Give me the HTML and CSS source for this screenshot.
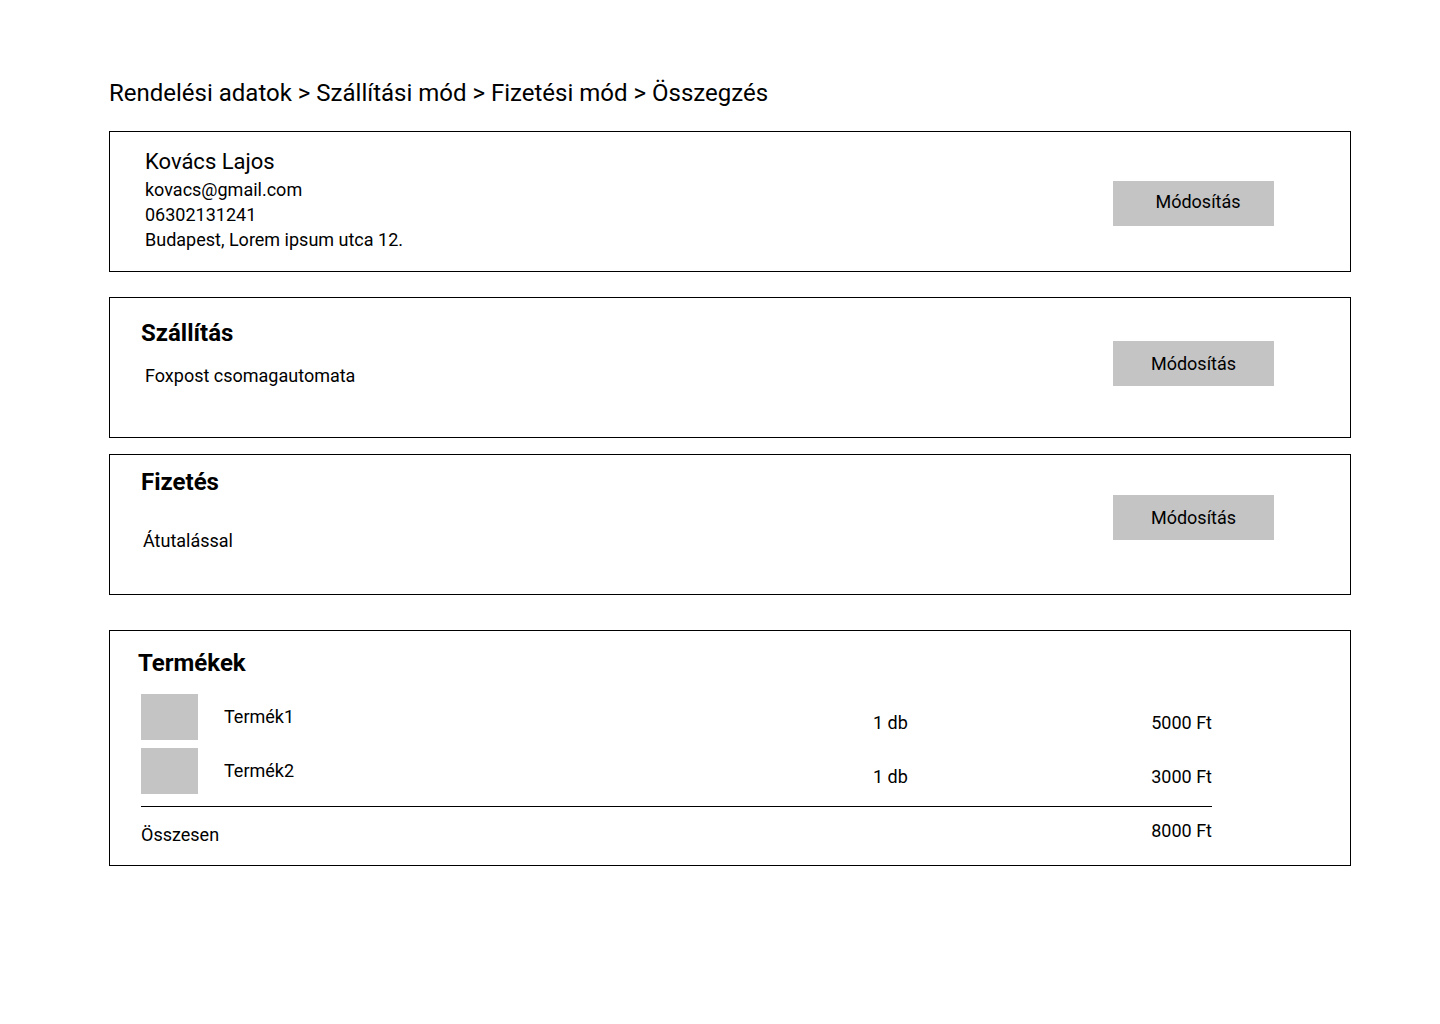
FILE: index.html
```html
<!DOCTYPE html>
<html lang="hu">
<head>
<meta charset="utf-8">
<title>Összegzés</title>
<link rel="stylesheet" href="styles.css">
</head>
<body>
<main class="page">
  <nav class="crumbs">Rendelési adatok &gt; Szállítási mód &gt; Fizetési mód &gt; Összegzés</nav>

  <section class="card card--customer">
    <div class="card-body">
      <div class="customer-name">Kovács Lajos</div>
      <div class="line">kovacs@gmail.com</div>
      <div class="line">06302131241</div>
      <div class="line">Budapest, Lorem ipsum utca 12.</div>
    </div>
    <button class="btn btn--customer">Módosítás</button>
  </section>

  <section class="card card--shipping">
    <div class="card-body">
      <h2 class="card-title">Szállítás</h2>
      <div class="value value--shipping">Foxpost csomagautomata</div>
    </div>
    <button class="btn btn--shipping">Módosítás</button>
  </section>

  <section class="card card--payment">
    <div class="card-body">
      <h2 class="card-title">Fizetés</h2>
      <div class="value value--payment">Átutalással</div>
    </div>
    <button class="btn btn--payment">Módosítás</button>
  </section>

  <section class="card card--products">
    <h2 class="card-title card-title--products">Termékek</h2>
    <div class="products">
      <div class="product">
        <div class="thumb"></div>
        <div class="p-name">Termék1</div>
        <div class="p-qty">1 db</div>
        <div class="p-price">5000 Ft</div>
      </div>
      <div class="product">
        <div class="thumb"></div>
        <div class="p-name">Termék2</div>
        <div class="p-qty">1 db</div>
        <div class="p-price">3000 Ft</div>
      </div>
    </div>
    <div class="total">
      <div class="total-label">Összesen</div>
      <div class="total-price">8000 Ft</div>
    </div>
  </section>
</main>
</body>
</html>
```

FILE: styles.css
```css
* { box-sizing: border-box; }

html, body {
  margin: 0;
  padding: 0;
  background: #ffffff;
}

body {
  font-family: Roboto, "Liberation Sans", Arial, sans-serif;
  color: #000;
}

.page {
  width: 1242px;
  margin-left: 109px;
  padding-top: 78px;
}

.crumbs {
  font-size: 24px;
  line-height: 30px;
  margin-bottom: 23px;
}

.card {
  border: 1px solid #000;
  display: flex;
  align-items: flex-start;
}

.card--customer,
.card--shipping,
.card--payment {
  height: 141px;
}

.card--customer { margin-bottom: 25px; padding: 14px 76px 0 35px; }
.card--shipping { margin-bottom: 16px; padding: 20px 76px 0 31px; }
.card--payment { margin-bottom: 35px; padding: 12px 76px 0 31px; }

.card-body { flex: 1; }

.customer-name {
  font-size: 22px;
  line-height: 31px;
}

.line {
  font-size: 18px;
  line-height: 25px;
}

.card-title {
  margin: 0;
  font-size: 24px;
  line-height: 30px;
  font-weight: 700;
}

.value {
  font-size: 18px;
  line-height: 24px;
}

.value--shipping { margin-top: 16px; padding-left: 4px; }
.value--payment { margin-top: 32px; padding-left: 2px; }

.btn {
  width: 161px;
  height: 45px;
  border: none;
  background: #c4c4c4;
  font-family: Roboto, "Liberation Sans", Arial, sans-serif;
  font-size: 18px;
  color: #000;
  padding: 0;
}

.btn--customer { margin-top: 35px; padding-left: 9px; padding-bottom: 4px; }
.btn--shipping { margin-top: 23px; padding-bottom: 1px; }
.btn--payment { margin-top: 28px; padding-bottom: 1px; }

.card--products {
  flex-direction: column;
  align-items: stretch;
  padding: 17px 138px 18px 31px;
}

.card-title--products {
  margin-left: -3px;
  margin-bottom: 16px;
}

.products {
  display: flex;
  flex-direction: column;
  gap: 8px;
}

.product {
  display: grid;
  grid-template-columns: 57px 675px 1fr auto;
  align-items: center;
  font-size: 18px;
  line-height: 24px;
}

.thumb {
  width: 57px;
  height: 46px;
  background: #c4c4c4;
}

.p-name { padding-left: 26px; }
.p-qty { padding-top: 12px; }
.p-price { padding-top: 12px; text-align: right; }

.total {
  margin-top: 12px;
  border-top: 1px solid #000;
  padding-top: 12px;
  display: flex;
  justify-content: space-between;
  align-items: flex-start;
  font-size: 18px;
  line-height: 24px;
}

.total-label { padding-top: 4px; }
```
